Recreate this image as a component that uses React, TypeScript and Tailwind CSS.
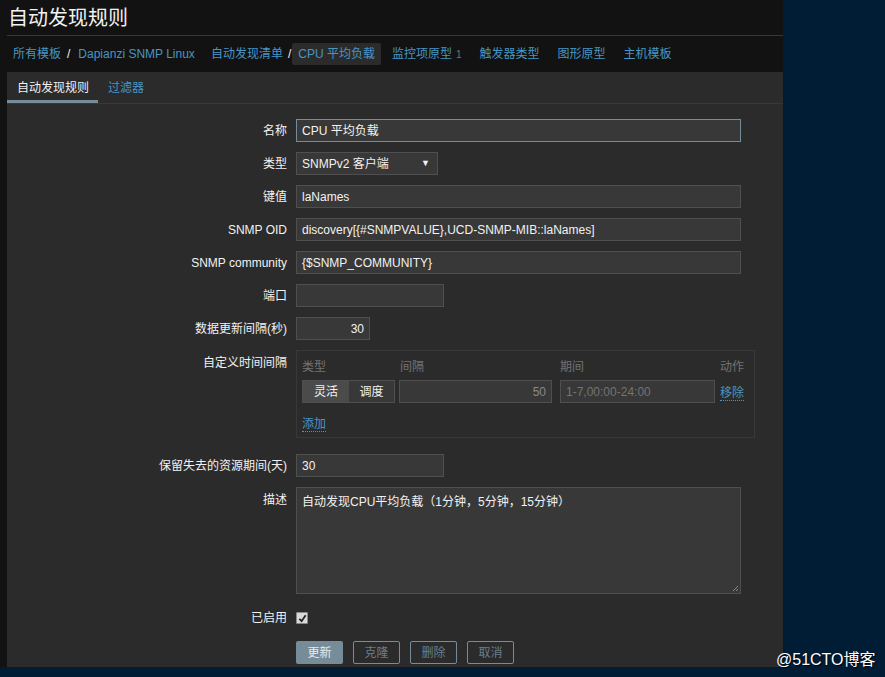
import React from "react";

const font = { fontFamily: '"Liberation Sans", Arial, "Noto Sans CJK SC", sans-serif' };

const links = [
  { text: "监控项原型", count: "1" },
  { text: "触发器类型" },
  { text: "图形原型" },
  { text: "主机模板" },
];

function Row({ label, children, top = false }: { label: string; children: React.ReactNode; top?: boolean }) {
  return (
    <div className={`flex ${top ? "items-start" : "items-center"} gap-[9px]`}>
      <div className={`w-[280px] shrink-0 text-right text-[12px] text-[#f2f2f2] ${top ? "pt-[4px]" : ""}`}>{label}</div>
      <div className="flex-1">{children}</div>
    </div>
  );
}

function Input({ value, w, right = false, focus = false }: { value: string; w: string; right?: boolean; focus?: boolean }) {
  return (
    <div
      className={`${w} h-[23px] px-[5px] flex items-center text-[12px] text-[#f2f2f2] bg-[#383838] border ${
        focus ? "border-[#768d99]" : "border-[#4f4f4f]"
      } ${right ? "justify-end" : ""}`}
    >
      {value}
    </div>
  );
}

export default function App() {
  return (
    <div className="relative w-[885px] h-[677px] bg-[#011c35] overflow-hidden" style={font}>
      <div className="w-[783px] h-[667px] bg-[#121212] pl-[7px] flex flex-col">
        {/* Header */}
        <div className="h-[36px] border-b border-[#383838] flex items-center">
          <h1 className="pl-[1px] text-[20px] leading-none text-[#f2f2f2]">自动发现规则</h1>
        </div>

        {/* Breadcrumbs */}
        <div className="h-[36px] flex items-center text-[12px] text-[#4796c4]">
          <span className="pl-[6px]">所有模板</span>
          <span className="pl-[6px] pr-[2px] text-[#f2f2f2]">/</span>
          <span className="pl-[6px]">Dapianzi SNMP Linux</span>
          <span className="pl-[16px]">自动发现清单</span>
          <span className="pl-[5px] pr-[1px] text-[#f2f2f2]">/</span>
          <span className="h-[22px] px-[6px] flex items-center bg-[#2b2b2b] rounded-[2px]">CPU 平均负载</span>
          {links.map((l) => (
            <span key={l.text} className="pl-[11px] pr-[7px]">
              {l.text}
              {l.count && <span className="ml-[4px] text-[10px] text-[#737373]">{l.count}</span>}
            </span>
          ))}
        </div>

        {/* Tabs */}
        <div className="h-[32px] bg-[#2b2b2b] border-b border-[#383838] flex items-stretch text-[12px]">
          <div className="w-[91px] pl-[10px] flex items-center border-b-[3px] border-[#768d99] text-[#f2f2f2] pt-[3px]">
            自动发现规则
          </div>
          <div className="pl-[10px] flex items-center text-[#4796c4]">过滤器</div>
        </div>

        {/* Form */}
        <div className="flex-1 bg-[#2b2b2b] pt-[15px] flex flex-col">
          <div className="flex flex-col gap-[10px]">
            <Row label="名称">
              <Input value="CPU 平均负载" w="w-[445px]" focus />
            </Row>
            <Row label="类型">
              <div className="w-[142px] h-[23px] px-[5px] flex items-center justify-between text-[12px] text-[#f2f2f2] bg-[#383838] border border-[#4f4f4f]">
                <span>SNMPv2 客户端</span>
                <span className="text-[9px] pr-[2px]">▼</span>
              </div>
            </Row>
            <Row label="键值">
              <Input value="laNames" w="w-[445px]" />
            </Row>
            <Row label="SNMP OID">
              <Input value="discovery[{#SNMPVALUE},UCD-SNMP-MIB::laNames]" w="w-[445px]" />
            </Row>
            <Row label="SNMP community">
              <Input value="{$SNMP_COMMUNITY}" w="w-[445px]" />
            </Row>
            <Row label="端口">
              <Input value="" w="w-[148px]" />
            </Row>
            <Row label="数据更新间隔(秒)">
              <Input value="30" w="w-[74px]" right />
            </Row>
          </div>

          {/* Custom intervals */}
          <div className="mt-[10px]">
            <Row label="自定义时间间隔" top>
              <div className="w-[459px] h-[88px] border border-[#383838] px-[5px] pt-[7px] flex flex-col">
                <div className="flex text-[12px] text-[#737373] h-[17px] items-center">
                  <span className="w-[98px]">类型</span>
                  <span className="w-[160px]">间隔</span>
                  <span className="w-[160px]">期间</span>
                  <span>动作</span>
                </div>
                <div className="mt-[5px] flex items-center gap-[4px]">
                  <div className="flex h-[23px] border border-[#4f4f4f] text-[12px] text-[#f2f2f2]">
                    <span className="w-[46px] flex items-center justify-center bg-[#4b4b4b]">灵活</span>
                    <span className="w-[45px] flex items-center justify-center bg-[#383838]">调度</span>
                  </div>
                  <div className="w-[153px] h-[23px] px-[5px] flex items-center justify-end text-[12px] text-[#8a8a8a] bg-[#383838] border border-[#4f4f4f]">
                    50
                  </div>
                  <div className="ml-[4px] w-[155px] h-[23px] px-[5px] flex items-center text-[12px] text-[#737373] bg-[#383838] border border-[#4f4f4f]">
                    1-7,00:00-24:00
                  </div>
                  <span className="ml-[1px] mt-[3px] text-[12px] text-[#4796c4] border-b border-dotted border-[#4796c4] leading-[14px]">
                    移除
                  </span>
                </div>
                <div className="mt-[8px]">
                  <span className="text-[12px] text-[#4796c4] border-b border-dotted border-[#4796c4] leading-[14px]">添加</span>
                </div>
              </div>
            </Row>
          </div>

          <div className="mt-[16px] flex flex-col gap-[10px]">
            <Row label="保留失去的资源期间(天)">
              <Input value="30" w="w-[148px]" />
            </Row>
            <Row label="描述" top>
              <div className="relative w-[445px] h-[107px] px-[5px] pt-[5px] text-[12px] text-[#f2f2f2] bg-[#383838] border border-[#4f4f4f]">
                自动发现CPU平均负载（1分钟，5分钟，15分钟）
                <svg className="absolute right-[1px] bottom-[1px]" width="7" height="7" viewBox="0 0 7 7">
                  <path d="M6 1L1 6M6 4L4 6" stroke="#8a8a8a" strokeWidth="1" />
                </svg>
              </div>
            </Row>
          </div>

          <div className="mt-[15px]">
            <Row label="已启用">
              <div className="w-[12px] h-[12px] bg-[#d9d9d9] border border-[#8a8a8a] rounded-[1px] flex items-center justify-center">
                <svg width="9" height="9" viewBox="0 0 10 10">
                  <path d="M1.5 5.5L4 8L8.5 1.5" stroke="#222" strokeWidth="2" fill="none" />
                </svg>
              </div>
            </Row>
          </div>

          <div className="mt-[14px] pl-[289px] flex gap-[10px] text-[12px]">
            <button className="w-[47px] h-[23px] bg-[#768d99] text-[#e6ebee] rounded-[2px]">更新</button>
            {["克隆", "删除", "取消"].map((b) => (
              <button key={b} className="w-[47px] h-[23px] border border-[#768d99] text-[#6a7f8b] rounded-[2px]">
                {b}
              </button>
            ))}
          </div>
        </div>
      </div>

      {/* watermark */}
      <div
        className="absolute left-[776px] top-[648px] text-[16px] text-white"
        style={{ textShadow: "1px 1px 1px rgba(0,0,0,0.8)" }}
      >
        @51CTO博客
      </div>
    </div>
  );
}
